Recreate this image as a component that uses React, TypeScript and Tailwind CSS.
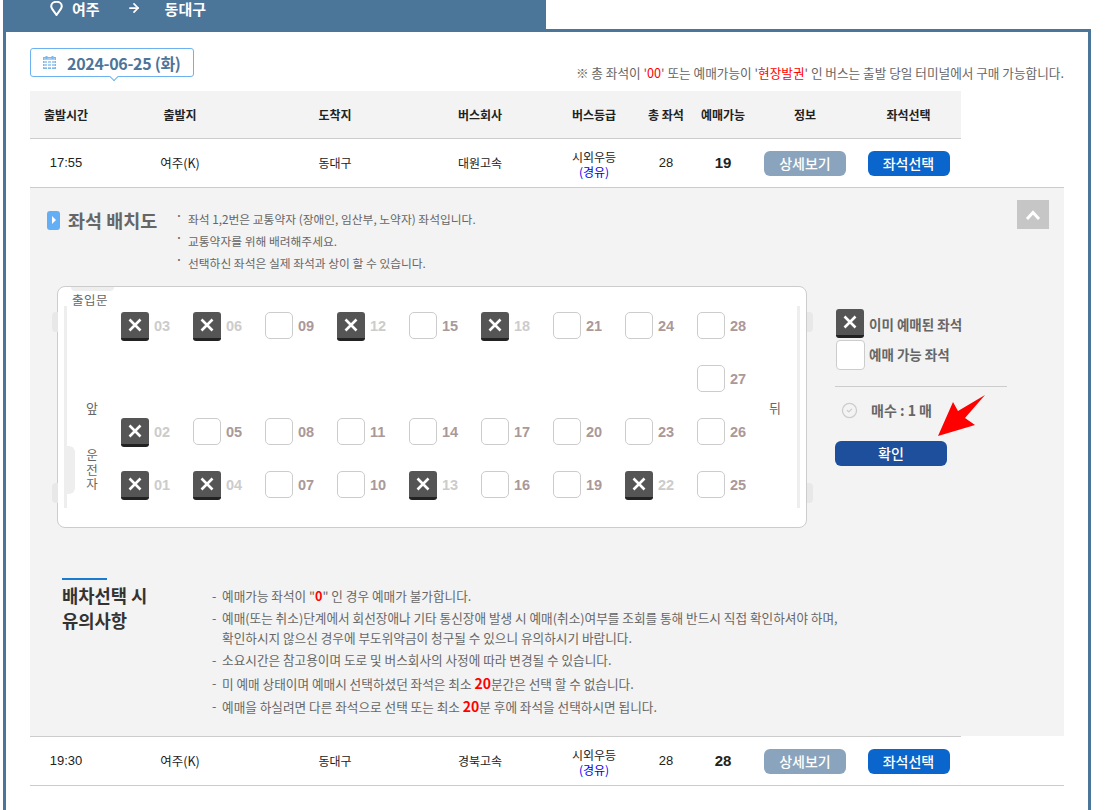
import React from "react";
import { ArrowRight, CircleCheck } from "lucide-react";

const FONT = "font-['Noto_Sans_CJK_KR','Noto_Sans',sans-serif]";

function Cols({ head = false, children }: { head?: boolean; children: React.ReactNode }) {
  return (
    <div className={`grid grid-cols-[72px_156px_154px_136px_92px_52px_62px_102px_105px] items-center w-[931px] text-center ${head ? "h-[47px] font-bold text-[#222] text-[12px]" : "h-[48px] text-[#222] text-[12px]"}`}>
      {children}
    </div>
  );
}

function BusRow({ time, company, left }: { time: string; company: string; left: string }) {
  return (
    <Cols>
      <div className="text-[13px] font-['Liberation_Sans',sans-serif]">{time}</div>
      <div className="text-[12.5px]">여주(K)</div>
      <div>동대구</div>
      <div>{company}</div>
      <div className="leading-[15px] pt-[1px]">
        <div>시외우등</div>
        <div className="text-[#0000ee]">(경유)</div>
      </div>
      <div className="text-[13px] font-['Liberation_Sans',sans-serif]">28</div>
      <div className="text-[15px] font-bold font-['Liberation_Sans',sans-serif]">{left}</div>
      <div className="flex justify-center">
        <button className="w-[82px] h-[25px] rounded-[6px] bg-[#8aa4bd] text-white text-[14px] font-medium leading-[25px]">상세보기</button>
      </div>
      <div className="flex justify-center">
        <button className="w-[82px] h-[25px] rounded-[6px] bg-[#0a66cc] text-white text-[14px] font-medium leading-[25px]">좌석선택</button>
      </div>
    </Cols>
  );
}

function XBox() {
  return (
    <div className="w-[28px] h-[29px] rounded-[3px] bg-[#555555] border-b-[3px] border-[#222222] flex items-center justify-center shrink-0">
      <svg width="14" height="14" viewBox="0 0 14 14">
        <path d="M1.5 1.5 L12.5 12.5 M12.5 1.5 L1.5 12.5" stroke="#fff" strokeWidth="2.6" />
      </svg>
    </div>
  );
}

function Seat({ n, taken }: { n: string; taken?: boolean }) {
  return (
    <div className="flex items-start w-[72px] h-[53px]">
      {taken ? (
        <XBox />
      ) : (
        <div className="w-[28px] h-[27px] rounded-[5px] bg-white border border-[#cccccc] shrink-0" />
      )}
      <span className={`ml-[5px] mt-[5px] text-[14.5px] leading-[18px] font-bold font-['Liberation_Sans',sans-serif] ${taken ? "text-[#cccccc]" : "text-[#ab9898]"}`}>{n}</span>
    </div>
  );
}

const rows: ([string, boolean] | null)[][] = [
  [["03", true], ["06", true], ["09", false], ["12", true], ["15", false], ["18", true], ["21", false], ["24", false], ["28", false]],
  [null, null, null, null, null, null, null, null, ["27", false]],
  [["02", true], ["05", false], ["08", false], ["11", false], ["14", false], ["17", false], ["20", false], ["23", false], ["26", false]],
  [["01", true], ["04", true], ["07", false], ["10", false], ["13", true], ["16", false], ["19", false], ["22", true], ["25", false]],
];

function Tab({ side, y }: { side: "l" | "r"; y: string }) {
  return <div className={`absolute w-[6px] h-[20px] bg-[#e8e8e8] ${side === "l" ? "left-[-6px] rounded-l-[4px]" : "right-[-7px] rounded-r-[4px]"} ${y}`} />;
}

export default function App() {
  return (
    <div className={`w-[1107px] h-[810px] overflow-hidden bg-white relative ${FONT}`}>
      {/* tab */}
      <div className="ml-[3px] w-[543px] h-[32px] bg-[#4c759a] flex items-start text-white font-bold text-[15px] leading-[17px]">
        <svg className="ml-[47px] mt-[1px]" width="13" height="15" viewBox="0 0 13 15" fill="none">
          <path d="M6.5 14 C4 10 1.2 7.6 1.2 5.2 A5.3 4.4 0 0 1 11.8 5.2 C11.8 7.6 9 10 6.5 14 Z" stroke="#fff" strokeWidth="2" />
        </svg>
        <span className="ml-[9px]">여주</span>
        <ArrowRight className="ml-[27px] mt-[1px]" size={14} strokeWidth={3} />
        <span className="ml-[24px]">동대구</span>
      </div>

      {/* box */}
      <div className="ml-[3px] w-[1088px] h-[790px] -mt-[3px] border-[3px] border-[#4c759a] border-b-0 px-[24px]">
        <div className="flex justify-between items-end pt-[16px]">
          <div className="relative w-[164px] h-[29px] border border-[#6cb2f0] rounded-[3px] flex items-center bg-white">
            <svg className="ml-[12px]" width="13" height="13" viewBox="0 0 13 13">
              <rect x="0.5" y="1.5" width="12" height="11" fill="#a9d0f3" stroke="#7db8ec" />
              <path d="M0 4.5H13 M0 7.5H13 M0 10.5H13 M4.5 4V13 M8.5 4V13" stroke="#fff" strokeWidth="1" />
              <rect x="2.5" y="0" width="2" height="3" fill="#7db8ec" />
              <rect x="8.5" y="0" width="2" height="3" fill="#7db8ec" />
            </svg>
            <span className="ml-[11px] text-[16px] font-bold text-[#4c759a] tracking-[-0.3px] whitespace-nowrap">2024-06-25 (화)</span>
            <div className="absolute left-[80px] bottom-[-4px] w-[6px] h-[6px] rotate-45 bg-white border-r border-b border-[#6cb2f0]" />
          </div>
          <div className="text-[12.65px] leading-[16px] text-[#666666] mb-[-4px] whitespace-nowrap">
            ※ 총 좌석이 '<span className="text-[#ff0000]">00</span>' 또는 예매가능이 '<span className="text-[#ff0000]">현장발권</span>' 인 버스는 출발 당일 터미널에서 구매 가능합니다.
          </div>
        </div>

        {/* header */}
        <div className="mt-[14px] w-[931px] bg-[#f3f3f3] border-b border-[#cccccc]">
          <Cols head>
            <div>출발시간</div>
            <div>출발지</div>
            <div>도착지</div>
            <div>버스회사</div>
            <div>버스등급</div>
            <div>총 좌석</div>
            <div>예매가능</div>
            <div>정보</div>
            <div>좌석선택</div>
          </Cols>
        </div>
        <div className="border-b border-[#cccccc]">
          <BusRow time="17:55" company="대원고속" left="19" />
        </div>

        {/* panel */}
        <div className="h-[548px] bg-[#f3f3f3] relative">
          <div className="flex items-start pt-[12px] pl-[17px] pr-[15px]">
            <div className="flex items-center mt-[10px] w-[132px] shrink-0">
              <div className="w-[13px] h-[19px] rounded-[3px] bg-[#64aef5] flex items-center justify-center">
                <div className="w-0 h-0 border-y-[4px] border-y-transparent border-l-[4px] border-l-white" />
              </div>
              <span className="ml-[8px] text-[18.5px] leading-[20px] font-bold text-[#666666] whitespace-nowrap">좌석 배치도</span>
            </div>
            <ul className="text-[11.75px] leading-[22px] text-[#666666] mt-[8px] -ml-[3px]">
              {["좌석 1,2번은 교통약자 (장애인, 임산부, 노약자) 좌석입니다.", "교통약자를 위해 배려해주세요.", "선택하신 좌석은 실제 좌석과 상이 할 수 있습니다."].map((t) => (
                <li key={t} className="flex">
                  <span className="w-[12px] -mt-[3px] text-[10px] font-bold">·</span>
                  <span>{t}</span>
                </li>
              ))}
            </ul>
            <div className="ml-auto w-[32px] h-[29px] bg-[#c6c6c6] flex items-center justify-center">
              <svg width="16" height="10" viewBox="0 0 16 10" fill="none">
                <path d="M2 9 L8 2.5 L14 9" stroke="#fff" strokeWidth="3" />
              </svg>
            </div>
          </div>

          <div className="flex items-start pl-[27px] mt-[12px]">
            {/* card */}
            <div className="relative w-[750px] h-[242px] bg-white border border-[#cccccc] rounded-[8px] pl-[63px] pt-[25px] text-[#666666]">
              <div className="absolute left-[13px] top-0 w-[43px] h-[4px] bg-[#eeeeee] rounded-b-[6px]" />
              <div className="absolute left-[14px] top-[5px] text-[12.5px] leading-[16px] tracking-[0.5px] whitespace-nowrap">출입문</div>
              <div className="absolute left-[6px] top-[19px] w-[3px] h-[202px] bg-[#eeeeee]" />
              <div className="absolute left-[9px] top-[159px] w-[8px] h-[48px] bg-[#eeeeee] rounded-r-[6px]" />
              <div className="absolute left-[28px] top-[113px] text-[13px] leading-[16px]">앞</div>
              <div className="absolute left-[27px] top-[161px] text-[12.5px] leading-[14.5px] w-[14px] text-center">운<br />전<br />자</div>
              <div className="absolute right-[6px] top-[19px] w-[3px] h-[202px] bg-[#eeeeee]" />
              <div className="absolute left-[711px] top-[113px] text-[13px] leading-[16px]">뒤</div>
              <Tab side="l" y="top-[25px]" />
              <Tab side="l" y="top-[196px]" />
              <Tab side="r" y="top-[25px]" />
              <Tab side="r" y="top-[196px]" />
              <div className="grid grid-cols-[repeat(9,72px)] auto-rows-[53px]">
                {rows.flat().map((s, i) => (s ? <Seat key={i} n={s[0]} taken={s[1]} /> : <div key={i} />))}
              </div>
            </div>

            {/* legend */}
            <div className="ml-[28px] w-[172px] pt-[23px] relative text-[#666666]">
              <div className="flex items-center h-[29px] pl-[1px]">
                <XBox />
                <span className="ml-[5px] mt-[1px] text-[13.5px] font-bold whitespace-nowrap">이미 예매된 좌석</span>
              </div>
              <div className="flex items-center mt-[2px] h-[30px] pl-[1px]">
                <div className="w-[29px] h-[30px] rounded-[4px] bg-white border border-[#cccccc]" />
                <span className="ml-[4px] -mt-[1px] text-[13.5px] font-bold whitespace-nowrap">예매 가능 좌석</span>
              </div>
              <div className="mt-[16px] border-t border-[#cccccc]" />
              <div className="flex items-center mt-[14px] h-[18px] pl-[6px]">
                <CircleCheck size={17} strokeWidth={1.8} color="#cccccc" />
                <span className="ml-[13px] text-[14px] font-bold whitespace-nowrap">매수 : 1 매</span>
              </div>
              <button className="mt-[22px] block w-[112px] h-[25px] rounded-[6px] bg-[#1e4f9c] text-white text-[14px] font-medium leading-[25px]">확인</button>
              <svg className="absolute left-[100px] top-[108px]" width="52" height="44" viewBox="0 0 52 44">
                <polygon points="3,42 18,8 23,17 50,1 30,24 40,31" fill="#ff0000" />
              </svg>
            </div>
          </div>

          {/* notes */}
          <div className="flex items-start mt-[50px]">
            <div className="w-[182px] pl-[32px] shrink-0">
              <div className="w-[45px] h-[2px] bg-[#1a7ad0]" />
              <div className="mt-[3px] text-[17.7px] leading-[25px] font-bold text-[#333333]">배차선택 시<br />유의사항</div>
            </div>
            <ul className="mt-[8px] text-[12.65px] leading-[20px] text-[#666666] flex flex-col gap-[2.2px]">
              <li className="flex"><span className="w-[10px]">-</span><span>예매가능 좌석이 "<b className="text-[#ff0000]">0</b>" 인 경우 예매가 불가합니다.</span></li>
              <li className="flex"><span className="w-[10px]">-</span><span>예매(또는 취소)단계에서 회선장애나 기타 통신장애 발생 시 예매(취소)여부를 조회를 통해 반드시 직접 확인하셔야 하며,<br />확인하시지 않으신 경우에 부도위약금이 청구될 수 있으니 유의하시기 바랍니다.</span></li>
              <li className="flex"><span className="w-[10px]">-</span><span>소요시간은 참고용이며 도로 및 버스회사의 사정에 따라 변경될 수 있습니다.</span></li>
              <li className="flex"><span className="w-[10px]">-</span><span>미 예매 상태이며 예매시 선택하셨던 좌석은 최소 <b className="text-[#ff0000] text-[14px] leading-[20px]">20</b>분간은 선택 할 수 없습니다.</span></li>
              <li className="flex"><span className="w-[10px]">-</span><span>예매을 하실려면 다른 좌석으로 선택 또는 최소 <b className="text-[#ff0000] text-[14px] leading-[20px]">20</b>분 후에 좌석을 선택하시면 됩니다.</span></li>
            </ul>
          </div>
        </div>

        <div className="w-[931px] border-t border-[#cccccc]" />
        <div className="border-b border-[#cccccc]">
          <BusRow time="19:30" company="경북고속" left="28" />
        </div>
      </div>
    </div>
  );
}
